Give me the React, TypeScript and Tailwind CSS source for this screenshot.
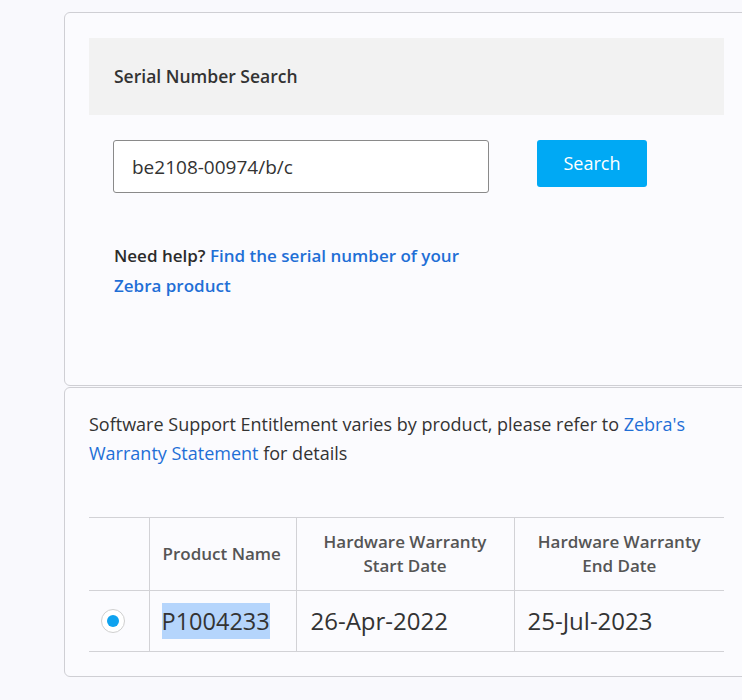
import { useState } from 'react'

const font = { fontFamily: '"Open Sans", Lato, sans-serif' }

function SearchCard() {
  const [serial, setSerial] = useState('be2108-00974/b/c')

  return (
    <div className="rounded-md border border-[#cfcfd4] bg-[#fbfbfe] px-[24px] pt-[25px] pb-[24px] h-[374px]">
      <div className="h-[77px] bg-[#f2f2f2] flex items-center px-[25px]">
        <h2 className="text-[17.5px] font-semibold text-[#333]">Serial Number Search</h2>
      </div>

      <div className="flex items-start mt-[25px] pl-[24px]">
        <input
          value={serial}
          onChange={(e) => setSerial(e.target.value)}
          className="w-[376px] h-[53px] border border-[#8a8a8a] rounded-[3px] bg-white px-[18px] text-[19px] text-[#333] focus:outline-none"
        />
        <button className="ml-[48px] w-[110px] h-[47px] rounded-[3px] bg-[#00a9f4] text-white text-[18px]">
          Search
        </button>
      </div>

      <p className="mt-[48px] pl-[25px] w-[400px] text-[17px] leading-[30px] font-semibold text-[#2b2b2b]">
        Need help?{' '}
        <a href="#" className="text-[#1f6fd6]">Find the serial number of your Zebra product</a>
      </p>
    </div>
  )
}

function WarrantyCard() {
  return (
    <div className="rounded-md border border-[#cfcfd4] bg-[#fbfbfe] px-[24px] pt-[22px] pb-[24px]">
      <p className="text-[18px] leading-[29px] text-[#333]">
        Software Support Entitlement varies by product, please refer to{' '}
        <a href="#" className="text-[#1f6fd6]">Zebra's Warranty Statement</a> for details
      </p>

      <table className="mt-[49px] w-[635px] border-collapse">
        <thead>
          <tr className="h-[73px] border-y border-[#d2d2d6]">
            <th className="w-[60px] border-r border-[#d2d2d6]"></th>
            <th className="w-[147px] border-r border-[#d2d2d6] text-left pl-[13px] text-[17px] font-semibold text-[#555]">
              Product Name
            </th>
            <th className="w-[218px] border-r border-[#d2d2d6] text-center text-[17px] leading-[24px] font-semibold text-[#555]">
              Hardware Warranty<br />Start Date
            </th>
            <th className="text-center text-[17px] leading-[24px] font-semibold text-[#555]">
              Hardware Warranty<br />End Date
            </th>
          </tr>
        </thead>
        <tbody>
          <tr className="h-[61px] border-b border-[#d2d2d6]">
            <td className="border-r border-[#d2d2d6]">
              <div className="ml-[12px] w-[24px] h-[24px] rounded-full border border-[#cfcfcf] bg-white flex items-center justify-center">
                <div className="w-[12px] h-[12px] rounded-full bg-[#0ea2ef]" />
              </div>
            </td>
            <td className="border-r border-[#d2d2d6] pl-[12px]">
              <span className="bg-[#b5d5fc] text-[23.5px] leading-[36px] text-[#333] inline-block">P1004233</span>
            </td>
            <td className="border-r border-[#d2d2d6] pl-[14px] text-[24px] text-[#333]">26-Apr-2022</td>
            <td className="pl-[13px] text-[24px] text-[#333]">25-Jul-2023</td>
          </tr>
        </tbody>
      </table>
    </div>
  )
}

export default function App() {
  return (
    <div className="w-[742px] h-[700px] overflow-hidden bg-[#f9f9fd]" style={font}>
      <div className="ml-[64px] w-[685px] pt-[12px] flex flex-col gap-[1px]">
        <SearchCard />
        <WarrantyCard />
      </div>
    </div>
  )
}
